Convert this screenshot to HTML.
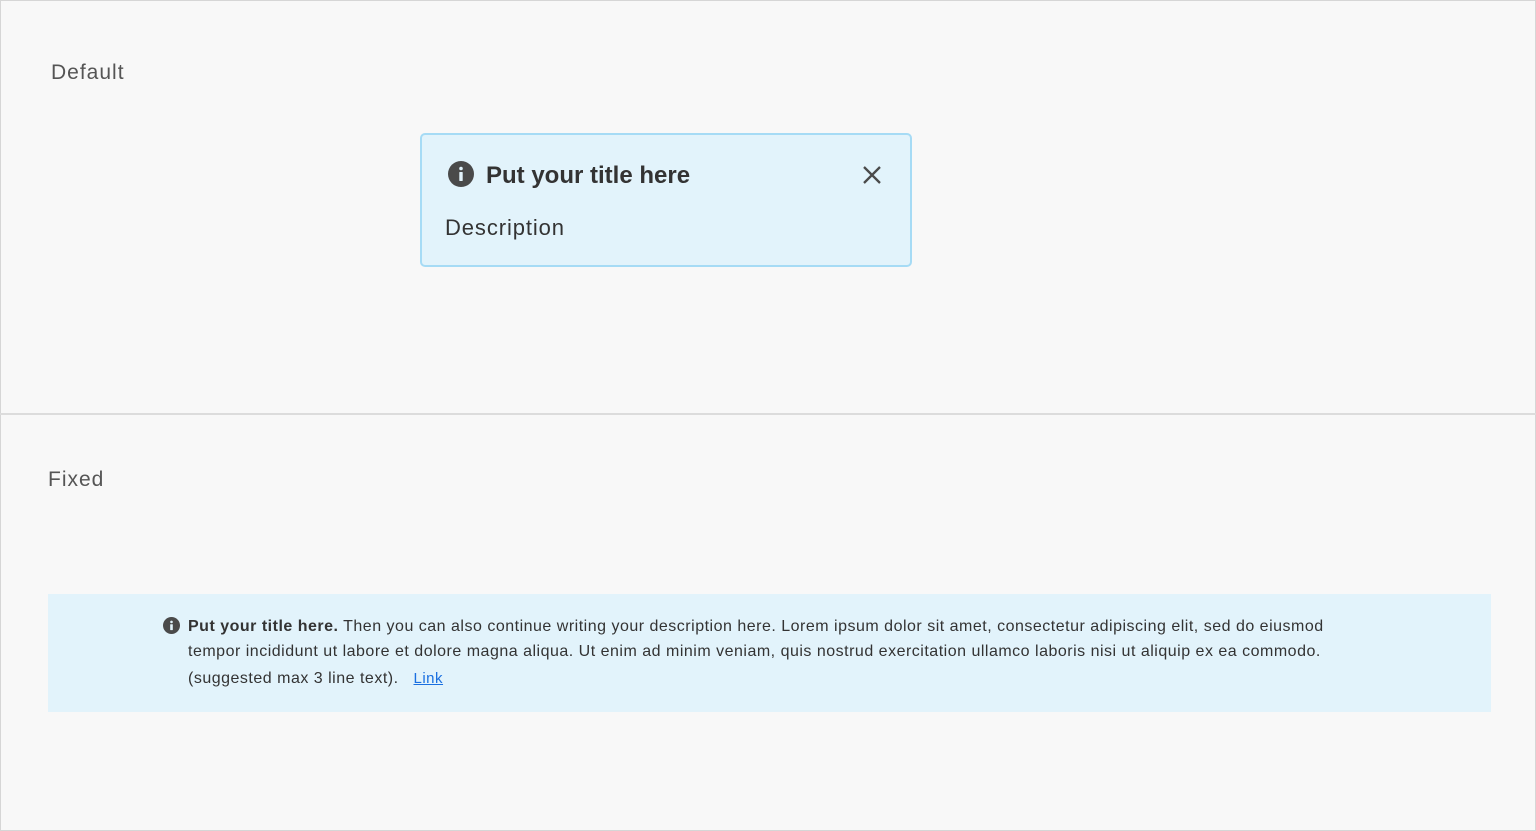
<!DOCTYPE html>
<html><head><meta charset="utf-8"><style>
html,body{margin:0;padding:0;}
body{width:1536px;height:831px;background:#f8f8f8;font-family:"Liberation Sans",sans-serif;position:relative;overflow:hidden;color:#333;}
.frame{position:absolute;left:0;top:0;width:1534px;height:829px;border:1px solid #d6d6d6;}
.div{position:absolute;left:0;top:413px;width:1536px;height:2px;background:#dcdcdc;}
.lbl{position:absolute;font-size:21px;color:#555;letter-spacing:1px;}
.card{position:absolute;left:420px;top:133px;width:488px;height:130px;background:#e2f3fb;border:2px solid #a6dbf5;border-radius:5px;}
.card .t{position:absolute;left:64px;top:27px;font-size:24px;font-weight:bold;color:#333;}
.card .d{position:absolute;left:23px;top:80px;font-size:22px;color:#333;letter-spacing:0.9px;}
.banner{position:absolute;left:48px;top:594px;width:1443px;height:118px;background:#e2f3fb;}
.banner .txt{position:absolute;left:140px;top:20px;font-size:16px;line-height:25px;color:#333;white-space:nowrap;letter-spacing:0.5px;}
.banner a{color:#1a6fe0;text-decoration:underline;margin-left:10px;font-size:15px;}
</style></head><body>
<div class="frame"></div>
<div class="div"></div>
<div class="lbl" style="left:51px;top:61px;">Default</div>
<div class="card">
<svg style="position:absolute;left:26px;top:26px" width="26" height="26" viewBox="0 0 26 26"><circle cx="13" cy="13" r="13" fill="#4a4a4a"/><circle cx="13" cy="7.5" r="1.8" fill="#e2f3fb"/><rect x="11.3" y="11" width="3.4" height="9" rx="0.5" fill="#e2f3fb"/></svg>
<div class="t">Put your title here</div>
<svg style="position:absolute;left:440px;top:30px" width="20" height="20" viewBox="0 0 20 20"><path d="M2 2L18 18M18 2L2 18" stroke="#4a4a4a" stroke-width="2.3"/></svg>
<div class="d">Description</div>
</div>
<div class="lbl" style="left:48px;top:468px;">Fixed</div>
<div class="banner">
<svg style="position:absolute;left:115px;top:23px" width="17" height="17" viewBox="0 0 26 26"><circle cx="13" cy="13" r="13" fill="#4a4a4a"/><circle cx="13" cy="7.5" r="2" fill="#e2f3fb"/><rect x="11" y="11" width="4" height="9" rx="0.5" fill="#e2f3fb"/></svg>
<div class="txt"><b>Put your title here.</b> Then you can also continue writing your description here. Lorem ipsum dolor sit amet, consectetur adipiscing elit, sed do eiusmod<br>tempor incididunt ut labore et dolore magna aliqua. Ut enim ad minim veniam, quis nostrud exercitation ullamco laboris nisi ut aliquip ex ea commodo.<br><span style="line-height:30px">(suggested max 3 line text).</span> <a>Link</a></div>
</div>
</body></html>
